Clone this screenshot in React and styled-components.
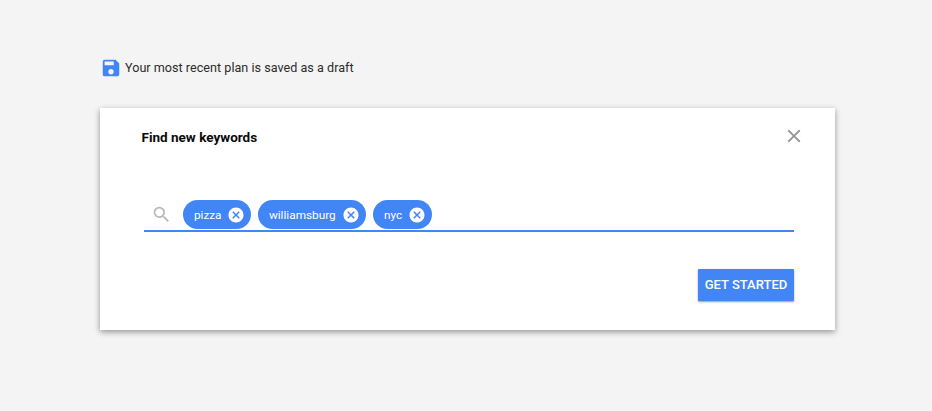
import styled, { createGlobalStyle } from 'styled-components';
import { MdCancel, MdClose, MdSave, MdSearch } from 'react-icons/md';

const keywords = [
  { id: 1, label: 'pizza', width: 68 },
  { id: 2, label: 'williamsburg', width: 108 },
  { id: 3, label: 'nyc', width: 59 },
];

const App = () => {
  return (
    <Page>
      <GlobalStyle />
      <DraftNotice>
        <SaveIcon />
        <DraftText>Your most recent plan is saved as a draft</DraftText>
      </DraftNotice>
      <Card>
        <CardHeader>
          <CardTitle>Find new keywords</CardTitle>
          <CloseButton aria-label="Close">
            <MdClose />
          </CloseButton>
        </CardHeader>
        <KeywordField>
          <SearchIcon />
          <ChipList>
            {keywords.map(keyword => (
              <Chip key={keyword.id} $width={keyword.width}>
                <ChipLabel>{keyword.label}</ChipLabel>
                <RemoveIcon />
              </Chip>
            ))}
          </ChipList>
        </KeywordField>
        <CardFooter>
          <StartButton>GET STARTED</StartButton>
        </CardFooter>
      </Card>
    </Page>
  );
};

const GlobalStyle = createGlobalStyle`
  * {
    box-sizing: border-box;
  }

  body {
    margin: 0;
    background-color: #f4f4f4;
    font-family: Roboto, "Liberation Sans", sans-serif;
  }
`;

const Page = styled.main`
  height: 411px;
  padding: 56px 97px 0 100px;
`;

const DraftNotice = styled.div`
  display: flex;
  align-items: center;
  height: 24px;
`;

const SaveIcon = styled(MdSave)`
  width: 22px;
  height: 22px;
  margin-left: -0.5px;
  color: #4285f4;
`;

const DraftText = styled.span`
  margin: -2px 0 0 3.5px;
  font-size: 12.6px;
  letter-spacing: 0.02px;
  color: #2c2c2c;
`;

const Card = styled.section`
  height: 222.5px;
  margin-top: 27.5px;
  padding: 18px 41px 0 41px;
  background-color: #fff;
  box-shadow: 0 2px 6px rgba(0, 0, 0, 0.4);
`;

const CardHeader = styled.header`
  display: flex;
  align-items: center;
  justify-content: space-between;
  height: 22px;
`;

const CardTitle = styled.h1`
  margin: 0 0 0 0.5px;
  font-size: 13.5px;
  font-weight: 700;
  color: #0a0a0a;
`;

const CloseButton = styled.button`
  display: flex;
  margin: -0.5px -11px 0 0;
  padding: 0;
  border: 0;
  background: none;
  font-size: 22px;
  color: #969696;
`;

const KeywordField = styled.div`
  display: flex;
  align-items: center;
  height: 32px;
  margin: 52.5px 0 0 3px;
  padding: 0 0 1px 6.5px;
  border-bottom: 2px solid #4285f4;
`;

const SearchIcon = styled(MdSearch)`
  width: 21px;
  height: 21px;
  color: #b9b9b9;
`;

const ChipList = styled.div`
  display: flex;
  gap: 7px;
  margin-left: 11.9px;
`;

const Chip = styled.div`
  display: flex;
  align-items: center;
  justify-content: space-between;
  width: ${props => props.$width}px;
  height: 28.5px;
  padding: 0 6px 0 10.5px;
  border-radius: 14.5px;
  background-color: #4285f4;
  color: #fff;
`;

const ChipLabel = styled.span`
  font-size: 11.8px;
`;

const RemoveIcon = styled(MdCancel)`
  width: 18px;
  height: 18px;
`;

const CardFooter = styled.footer`
  display: flex;
  justify-content: flex-end;
  margin-top: 36.5px;
`;

const StartButton = styled.button`
  width: 96px;
  height: 32.5px;
  padding: 0;
  border: 0;
  border-radius: 1px;
  background-color: #4285f4;
  box-shadow: 0 1px 2px rgba(0, 0, 0, 0.4);
  font-family: inherit;
  font-size: 13px;
  font-weight: 500;
  color: #fff;
`;

export default App;
